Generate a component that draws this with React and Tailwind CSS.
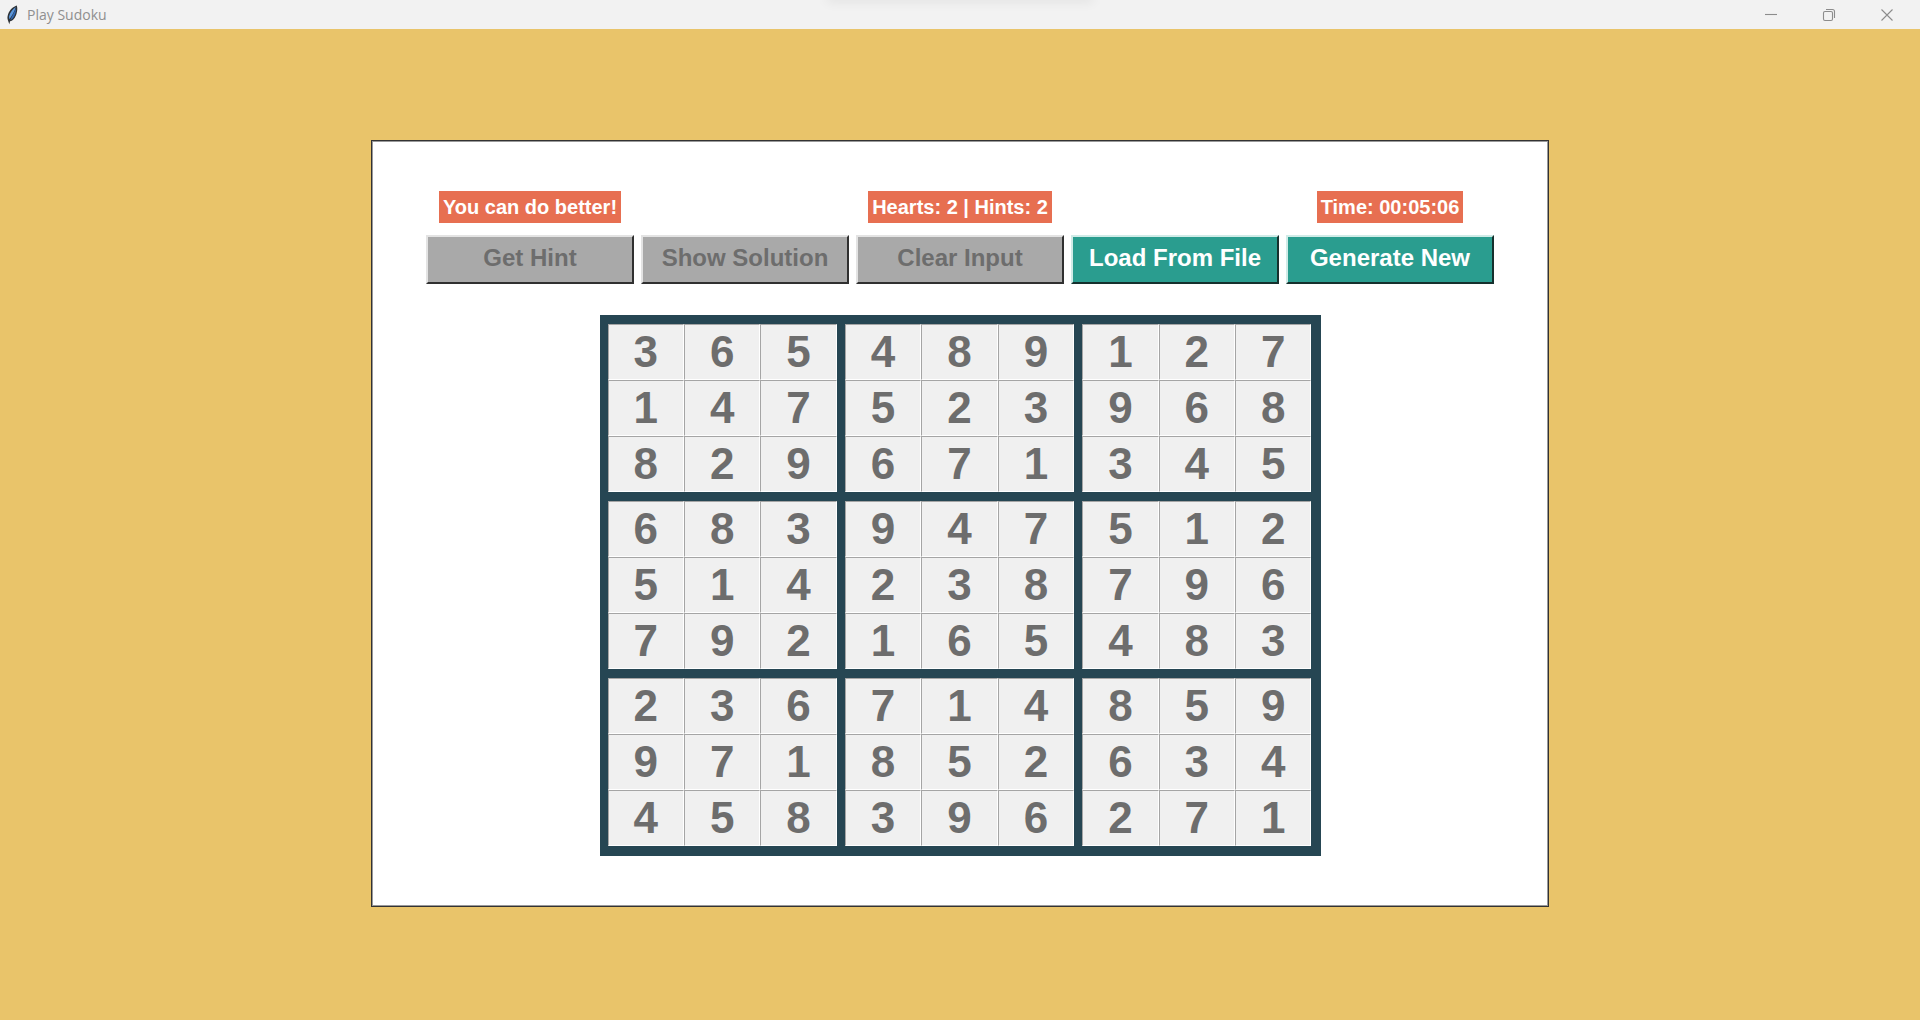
import React from "react";

const PUZZLE = [
  "365489127",
  "147523968",
  "829671345",
  "683947512",
  "514238796",
  "792165483",
  "236714859",
  "971852634",
  "458396271",
];

const BLOCKS = [0, 1, 2, 3, 4, 5, 6, 7, 8];

const ACTIONS = [
  { label: "Get Hint", disabled: true },
  { label: "Show Solution", disabled: true },
  { label: "Clear Input", disabled: true },
  { label: "Load From File", disabled: false },
  { label: "Generate New", disabled: false },
];

function Feather() {
  return (
    <svg width="13" height="20" viewBox="0 0 13 20" aria-hidden="true">
      <path d="M10.800 0.500C7.500 1.500 3.500 4.500 2 9.500c-.7 2.300-.8 4 0 6l1.300 3.800.8-3C7 16 9.500 12.500 10.600 8.500c.8-3 1-5.500.2-8z" fill="#2d3238" />
      <path d="M9.800 2C6.800 4 4 7.500 3 11.500l.2 2.800C5.500 11.500 8.300 7 9.800 2z" fill="#5b97dc" />
      <path d="M10 3.500C8 7.500 5.800 11.500 4.300 15c2.700-1 4.200-4 5.100-7 .5-1.700.8-3.200.6-4.500z" fill="#2f68b5" />
    </svg>
  );
}

function WindowButton({ label, children }) {
  return (
    <button type="button" aria-label={label} className="flex h-full w-[58px] items-center justify-center">
      <svg width="14" height="14" viewBox="0 0 14 14" fill="none" stroke="#8c8c8c" strokeWidth="1.1" aria-hidden="true">
        {children}
      </svg>
    </button>
  );
}

function TitleBar() {
  return (
    <header className="relative flex h-[29px] shrink-0 items-center justify-between overflow-hidden bg-[#f2f2f2]">
      <div className="absolute inset-x-0 -top-1 mx-auto h-1 w-[264px] shadow-[0_0_12px_1px_rgba(0,0,0,0.1)]" />
      <div className="flex items-center gap-2 pl-[6px]">
        <Feather />
        <h1 className="font-['Open_Sans',sans-serif] text-[14px] leading-5 text-[#8f8f8f]">Play Sudoku</h1>
      </div>
      <div className="flex h-full pr-1">
        <WindowButton label="Minimize">
          <path d="M1 6.500h12" />
        </WindowButton>
        <WindowButton label="Restore">
          <rect x="1.500" y="3.500" width="9" height="9" rx="1.500" />
          <path d="M4 1.500h6.500a2 2 0 0 1 2 2V10" />
        </WindowButton>
        <WindowButton label="Close">
          <path d="M1.500 1.500l11 11M12.500 1.500l-11 11" />
        </WindowButton>
      </div>
    </header>
  );
}

function Status({ children }) {
  return (
    <p className="h-8 justify-self-center whitespace-nowrap bg-[#e76f51] px-1 text-[20px] leading-8 text-white">{children}</p>
  );
}

function ActionButton({ label, disabled }) {
  return (
    <button
      type="button"
      disabled={disabled}
      className="h-[49px] whitespace-nowrap border-2 border-t-[#d0ebe7] border-r-[#16302d] border-b-[#16302d] border-l-[#d0ebe7] bg-[#2a9d8f] pb-0.5 text-[24px] leading-8 text-white disabled:border-t-[#e3e3e3] disabled:border-r-[#303030] disabled:border-b-[#303030] disabled:border-l-[#e3e3e3] disabled:bg-[#a9a9a9] disabled:text-[#6d6d6d]"
    >
      {label}
    </button>
  );
}

function Block({ index }) {
  const top = Math.floor(index / 3) * 3;
  const left = (index % 3) * 3;
  const cells = BLOCKS.map((i) => ({ row: top + Math.floor(i / 3), col: left + (i % 3) }));
  return (
    <div className="grid h-[169px] grid-cols-3 grid-rows-3">
      {cells.map(({ row, col }) => (
        <input
          key={row + "-" + col}
          type="text"
          disabled
          aria-label={`Row ${row + 1}, column ${col + 1}`}
          defaultValue={PUZZLE[row][col]}
          className="h-full w-full min-w-0 border border-t-[#a5a5a5] border-r-white border-b-white border-l-[#a5a5a5] bg-[#f0f0f0] text-center text-[44px] leading-[50px] text-[#6d6d6d]"
        />
      ))}
    </div>
  );
}

export default function App() {
  return (
    <div className="flex min-h-screen flex-col bg-[#e9c46a] font-['Liberation_Sans',Arial,sans-serif]">
      <TitleBar />
      <main className="flex grow items-center justify-center pb-[3px]">
        <section className="w-full max-w-[1178px] border border-[#333] bg-white px-[54px] py-[50px] font-bold shadow-[inset_0_0_0_1px_#999]">
          <div className="grid grid-cols-5 gap-x-[7px] gap-y-3">
            <Status>You can do better!</Status>
            <div className="col-span-3 grid">
              <Status>Hearts: 2 | Hints: 2</Status>
            </div>
            <Status>Time: 00:05:06</Status>
            {ACTIONS.map((a) => (
              <ActionButton key={a.label} label={a.label} disabled={a.disabled} />
            ))}
          </div>
          <div className="mx-auto mt-[31px] grid max-w-[721px] grid-cols-3 gap-2 bg-[#264653] py-[9px] pr-[9px] pl-2">
            {BLOCKS.map((i) => (
              <Block key={i} index={i} />
            ))}
          </div>
        </section>
      </main>
    </div>
  );
}
